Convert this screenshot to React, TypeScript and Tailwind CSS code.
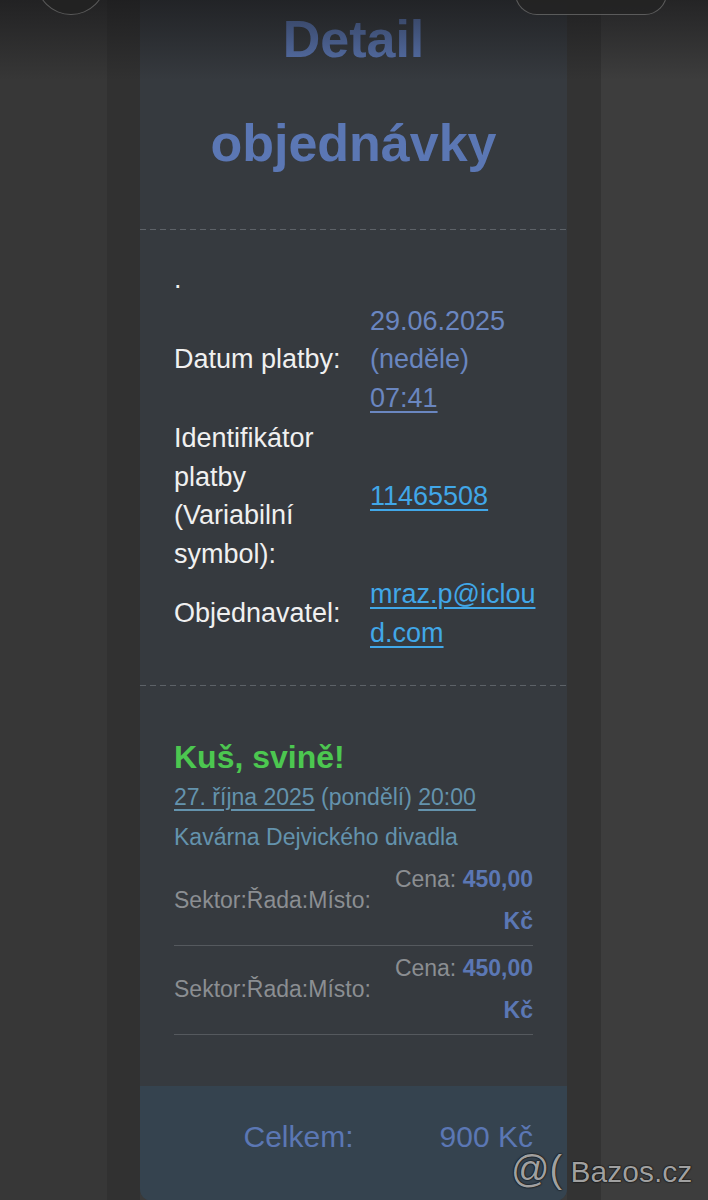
const dashed =
  "h-px w-full bg-[repeating-linear-gradient(90deg,#5d6268_0_6px,transparent_6px_10px)]";

function InfoRow({ label, children }: { label: React.ReactNode; children: React.ReactNode }) {
  return (
    <>
      <div>{label}</div>
      <div>{children}</div>
    </>
  );
}

function Ticket() {
  return (
    <div className="grid grid-cols-[1fr_150px] items-center border-b border-[#55595e] pt-[1px] pb-[3px] text-[23px] leading-[42px]">
      <div className="text-[#8b8e92]">Sektor:Řada:Místo:</div>
      <div className="text-right">
        <span className="text-[#8b8e92]">Cena: </span>
        <span className="font-bold text-[#5b77b4]">450,00 Kč</span>
      </div>
    </div>
  );
}

export default function App() {
  return (
    <div className="relative flex h-[1200px] w-[708px] overflow-hidden bg-[#3a3a3a] font-['Liberation_Sans',Arial,sans-serif]">
      <div className="w-[107px] shrink-0 bg-[#373737]" />
      <div className="w-[33px] shrink-0 bg-[#313131]" />

      <div className="w-[427px] shrink-0 self-start overflow-hidden rounded-b-xl bg-[#363a3f]">
        {/* heading */}
        <h1 className="-mt-[13px] pb-[34px] text-center text-[52px] font-bold leading-[104px] text-[#5b77b4]">
          Detail
          <br />
          objednávky
        </h1>
        <div className={dashed} />

        {/* payment info */}
        <div className="pt-[30px] pr-[30px] pb-[33px] pl-[34px] text-[27px] leading-[38.5px] text-[#f0f0f0]">
          <div className="mb-[3px]">.</div>
          <div className="grid grid-cols-[196px_1fr] items-center gap-y-[2px]">
            <InfoRow label="Datum platby:">
              <span className="text-[#6a86c0]">
                29.06.2025 (neděle) <span className="underline underline-offset-4">07:41</span>
              </span>
            </InfoRow>
            <InfoRow
              label={
                <>
                  Identifikátor
                  <br />
                  platby
                  <br />
                  (Variabilní
                  <br />
                  symbol):
                </>
              }
            >
              <a className="text-[#41a7e8] underline underline-offset-4">11465508</a>
            </InfoRow>
            <InfoRow label="Objednavatel:">
              <a className="break-all text-[#41a7e8] underline underline-offset-4">mraz.p@icloud.com</a>
            </InfoRow>
          </div>
        </div>
        <div className={dashed} />

        {/* event */}
        <div className="px-[34px] pt-[51px] pb-[51px]">
          <h2 className="text-[32px] font-bold leading-[40px] text-[#4cc750]">Kuš, svině!</h2>
          <div className="text-[23px] leading-[40px] text-[#6493ad]">
            <span className="underline underline-offset-4">27. října 2025</span> (pondělí){" "}
            <span className="underline underline-offset-4">20:00</span>
          </div>
          <div className="text-[23px] leading-[40px] text-[#6493ad]">Kavárna Dejvického divadla</div>
          <Ticket />
          <Ticket />
        </div>

        {/* total */}
        <div className="grid grid-cols-2 bg-[#35434f] px-[34px] pt-[28px] pb-[42px] text-right text-[30px] leading-[45px] text-[#5b77b4]">
          <div>Celkem:</div>
          <div>900 Kč</div>
        </div>
      </div>

      <div className="w-[34px] shrink-0 bg-[#333333]" />
      <div className="flex-1 bg-[#3d3d3d]" />

      {/* top status fade and floating buttons */}
      <div className="pointer-events-none absolute inset-x-0 top-0 h-[80px] bg-gradient-to-b from-[#141416]/60 to-transparent" />
      <div className="absolute top-[-55px] left-[36px] h-[70px] w-[70px] rounded-full border border-white/25 bg-[#222222]/90" />
      <div className="absolute top-[-40px] left-[515px] h-[55px] w-[152px] rounded-[22px] border border-white/25 bg-[#232323]/90" />

      {/* watermark */}
      <div className="absolute top-[1149px] left-[511px] leading-[40px] whitespace-nowrap text-[#a0a0a0] [text-shadow:0_0_2px_#000,0_0_1px_#000]">
        <span className="text-[38px]">@(</span>
        <span className="text-[30px]"> Bazos.cz</span>
      </div>
    </div>
  );
}
